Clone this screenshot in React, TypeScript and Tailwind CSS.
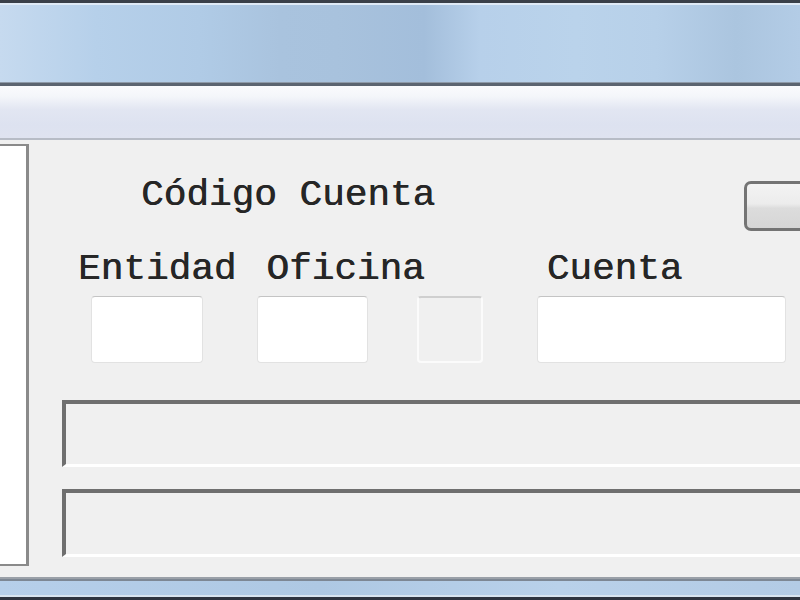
import React from "react";

const mono = { fontFamily: '"Liberation Mono", "Courier New", monospace' };

export default function App() {
  return (
    <div className="w-[800px] h-[600px] overflow-hidden flex flex-col bg-[#f0f0f0]">
      {/* window top edge */}
      <div className="h-[3px] bg-[#3a4049] shrink-0" />
      <div className="h-[2px] bg-[#dfeaf6] shrink-0" />
      {/* title bar */}
      <div className="h-[77px] shrink-0 bg-[linear-gradient(to_right,#c6daef_0%,#b6d0ea_12%,#b0cbe6_25%,#a9c3de_35%,#a8c2dd_42%,#a3bedb_53%,#b7d0ea_60%,#bad3eb_72%,#b7d0e9_82%,#abc5df_92%,#b3cce6_100%)]" />
      <div className="h-[1px] bg-[#8e9aa8] shrink-0" />
      <div className="h-[3px] bg-[#5b6470] shrink-0" />
      {/* menu strip */}
      <div className="h-[52px] shrink-0 bg-[linear-gradient(to_bottom,#fafbfd_0%,#f4f6fa_20%,#e2e6f2_45%,#dde2f0_75%,#dfe3f0_100%)]" />
      <div className="h-[2px] bg-[#b7bcc6] shrink-0" />
      {/* content */}
      <div className="flex flex-1 min-h-0">
        {/* left panel */}
        <div className="w-[29px] shrink-0 mt-[4px] h-[422px] bg-white border-t-2 border-r-[3px] border-b-2 border-[#8a8a8a]" />
        {/* right column */}
        <div className="flex-1 flex flex-col min-w-0 [text-shadow:0.6px_0_0_#262626]" style={mono}>
          {/* row 1 */}
          <div className="flex items-start mt-[36px] justify-between">
            <span className="ml-[112px] text-[37.7px] leading-[38px] text-[#262626] whitespace-nowrap">
              Código Cuenta
            </span>
            <div className="mt-[5px] mr-[-40px] w-[96px] h-[50px] rounded-[7px] border-[3px] border-[#747474] bg-[linear-gradient(to_bottom,#f3f3f3_0%,#ececec_45%,#dcdcdc_55%,#d6d6d6_100%)]" />
          </div>
          {/* labels */}
          <div className="flex mt-[19px] text-[37.7px] leading-[38px] text-[#262626] whitespace-nowrap">
            <span className="ml-[49px]">Entidad</span>
            <span className="ml-[30px]">Oficina</span>
            <span className="ml-[122px]">Cuenta</span>
          </div>
          {/* inputs */}
          <div className="flex mt-[8px] h-[67px]">
            <div className="ml-[62px] w-[112px] h-full bg-white rounded-[4px] border border-[#e2e2e2] border-t-[#c4c4c4]" />
            <div className="ml-[54px] w-[111px] h-full bg-white rounded-[4px] border border-[#e2e2e2] border-t-[#c4c4c4]" />
            <div className="ml-[49px] w-[66px] h-full bg-[#f0f0f0] rounded-[4px] border-2 border-[#fbfbfb] border-t-[#cfcfcf]" />
            <div className="ml-[54px] w-[249px] h-full bg-white rounded-[4px] border border-[#e2e2e2] border-t-[#c4c4c4]" />
          </div>
          {/* bars */}
          <div className="mt-[37px] ml-[33px] mr-[-40px] h-[67px] bg-[#f0f0f0] border-t-[4px] border-l-[4px] border-b-[3px] border-r-[3px] border-t-[#6f6f6f] border-l-[#6f6f6f] border-b-white border-r-white" />
          <div className="mt-[22px] ml-[33px] mr-[-40px] h-[68px] bg-[#f0f0f0] border-t-[4px] border-l-[4px] border-b-[3px] border-r-[3px] border-t-[#6f6f6f] border-l-[#6f6f6f] border-b-white border-r-white" />
        </div>
      </div>
      {/* bottom frame */}
      <div className="h-[2px] bg-[#9aa0a8] shrink-0" />
      <div className="h-[2px] bg-[#7d8794] shrink-0" />
      <div className="h-[14px] bg-[linear-gradient(to_right,#b6cfea_0%,#aec8e3_40%,#b9d1ea_70%,#b3cbe5_100%)] shrink-0" />
      <div className="h-[2px] bg-[#d8e4f0] shrink-0" />
      <div className="h-[3px] bg-[#2e3440] shrink-0" />
    </div>
  );
}
